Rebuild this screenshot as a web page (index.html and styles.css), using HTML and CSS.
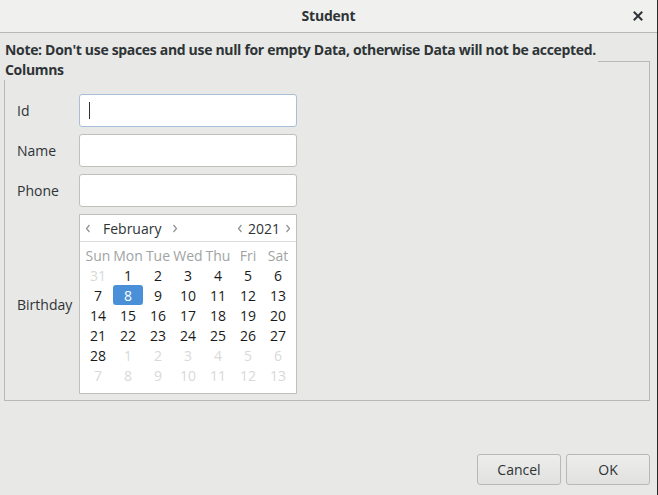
FILE: index.html
```html
<!DOCTYPE html>
<html>
<head>
<meta charset="utf-8">
<link rel="stylesheet" href="styles.css">
</head>
<body>
<div class="window">
  <header class="titlebar">
    <span class="title">Student</span>
    <span class="close">
      <svg width="10" height="10" viewBox="0 0 10 10"><path d="M1.5 1.5 L8.5 8.5 M8.5 1.5 L1.5 8.5" stroke="#2e3436" stroke-width="2" stroke-linecap="square"/></svg>
    </span>
  </header>
  <main class="content">
    <section class="frame">
      <div class="frame-label">Note: Don't use spaces and use null for empty Data, otherwise Data will not be accepted.<br>Columns</div>
      <div class="frame-corner"></div>
      <div class="frame-body">
        <div class="row"><label class="lbl">Id</label><div class="entry focus"><span class="caret"></span></div></div>
        <div class="row"><label class="lbl">Name</label><div class="entry"></div></div>
        <div class="row"><label class="lbl">Phone</label><div class="entry"></div></div>
        <div class="row"><label class="lbl">Birthday</label>
          <div class="calendar">
            <div class="cal-head">
              <div class="cal-nav month">
                <svg class="chev" width="6" height="9" viewBox="0 0 6 9"><path d="M4.5 1 L1.5 4.5 L4.5 8" fill="none" stroke="#8e9192" stroke-width="1.2"/></svg>
                <span class="cal-month">February</span>
                <svg class="chev" width="6" height="9" viewBox="0 0 6 9"><path d="M1.5 1 L4.5 4.5 L1.5 8" fill="none" stroke="#8e9192" stroke-width="1.2"/></svg>
              </div>
              <div class="cal-nav year">
                <svg class="chev" width="6" height="9" viewBox="0 0 6 9"><path d="M4.5 1 L1.5 4.5 L4.5 8" fill="none" stroke="#8e9192" stroke-width="1.2"/></svg>
                <span class="cal-year">2021</span>
                <svg class="chev" width="6" height="9" viewBox="0 0 6 9"><path d="M1.5 1 L4.5 4.5 L1.5 8" fill="none" stroke="#8e9192" stroke-width="1.2"/></svg>
              </div>
            </div>
            <div class="cal-grid">
              <span class="dn">Sun</span><span class="dn">Mon</span><span class="dn">Tue</span><span class="dn">Wed</span><span class="dn">Thu</span><span class="dn">Fri</span><span class="dn">Sat</span>
              <span class="other">31</span><span>1</span><span>2</span><span>3</span><span>4</span><span>5</span><span>6</span>
              <span>7</span><span class="sel">8</span><span>9</span><span>10</span><span>11</span><span>12</span><span>13</span>
              <span>14</span><span>15</span><span>16</span><span>17</span><span>18</span><span>19</span><span>20</span>
              <span>21</span><span>22</span><span>23</span><span>24</span><span>25</span><span>26</span><span>27</span>
              <span>28</span><span class="other">1</span><span class="other">2</span><span class="other">3</span><span class="other">4</span><span class="other">5</span><span class="other">6</span>
              <span class="other">7</span><span class="other">8</span><span class="other">9</span><span class="other">10</span><span class="other">11</span><span class="other">12</span><span class="other">13</span>
            </div>
          </div>
        </div>
      </div>
    </section>
    <div class="buttons">
      <button class="btn">Cancel</button>
      <button class="btn">OK</button>
    </div>
  </main>
</div>
</body>
</html>
```
FILE: styles.css
```css
* { box-sizing: border-box; }
html, body { margin: 0; padding: 0; }
body {
  width: 658px;
  height: 495px;
  overflow: hidden;
  background: #e8e8e7;
  font-family: "Open Sans", "Noto Sans", sans-serif;
  font-size: 14px;
  color: #2e3436;
}
.window {
  width: 658px;
  height: 495px;
  border-right: 1px solid #2a2a2a;
  display: flex;
  flex-direction: column;
}
.titlebar {
  height: 33px;
  flex: none;
  background: #f0f0ef;
  border-bottom: 1px solid #b8b8b5;
  display: grid;
  grid-template-columns: 1fr auto 1fr;
  align-items: center;
}
.title {
  grid-column: 2;
  font-weight: bold;
  font-size: 14px;
  padding-bottom: 1px;
  letter-spacing: -0.2px;
}
.close {
  grid-column: 3;
  justify-self: end;
  margin-right: 14px;
  display: flex;
  margin-bottom: 1px;
}
.content {
  flex: 1;
  display: flex;
  flex-direction: column;
  padding: 7px 7px 10px 4px;
}
.frame {
  display: grid;
  grid-template-columns: 594px 1fr;
}
.frame-label {
  font-weight: bold;
  line-height: 20px;
  padding-left: 1px;
  white-space: nowrap;
  font-size: 14px;
  letter-spacing: -0.32px;
}
.frame-corner {
  margin-top: 21px;
  border-top: 1px solid #b8b8b5;
  border-right: 1px solid #b8b8b5;
}
.frame-body {
  grid-column: 1 / span 2;
  border: 1px solid #b8b8b5;
  border-top: none;
  padding: 14px 0 6px 12px;
  display: flex;
  flex-direction: column;
  gap: 7px;
}
.row {
  display: flex;
  align-items: center;
}
.lbl {
  width: 62px;
}
.entry {
  width: 218px;
  height: 33px;
  background: #fff;
  border: 1px solid #bfc1bd;
  border-radius: 3px;
  display: flex;
  align-items: center;
  padding-left: 9px;
}
.entry.focus { border-color: #a9bfd9; }
.caret {
  width: 1px;
  height: 17px;
  background: #2e3436;
}
.calendar {
  width: 218px;
  height: 180px;
  background: #fff;
  border: 1px solid #bfc1bd;
  display: flex;
  flex-direction: column;
}
.cal-head {
  height: 27px;
  border-bottom: 1px solid #dcdcdb;
  display: flex;
  justify-content: space-between;
  align-items: center;
  padding: 0 5px 0 5px;
}
.cal-nav {
  display: flex;
  align-items: center;
}
.cal-month { margin: 0 11px 0 12px; }
.cal-year { margin: 0 5px 0 5px; }
.cal-grid {
  padding: 3px 3px 0 3px;
  display: grid;
  grid-template-columns: repeat(7, 30px);
  grid-auto-rows: 20px;
}
.cal-grid span {
  display: flex;
  align-items: center;
  justify-content: center;
  color: #1a1a1a;
}
.cal-grid .dn { color: #a1a4a3; }
.cal-grid .other { color: #d8d9d8; }
.cal-grid .sel {
  background: #4a90d9;
  color: #fff;
  border-radius: 3px;
}
.buttons {
  margin-top: auto;
  display: flex;
  justify-content: flex-end;
  gap: 5px;
}
.btn {
  width: 84px;
  height: 31px;
  font-family: inherit;
  font-size: 14px;
  color: #2e3436;
  background: linear-gradient(#ededec, #e1e1df);
  border: 1px solid #b8b8b4;
  border-radius: 3px;
  padding: 0;
}
```
